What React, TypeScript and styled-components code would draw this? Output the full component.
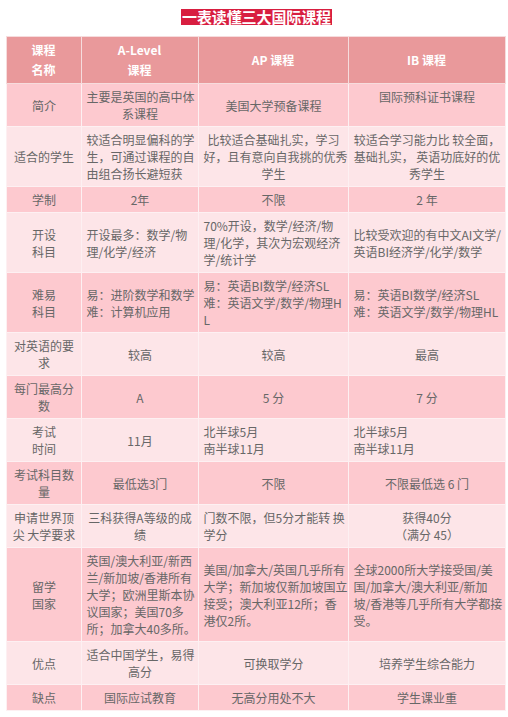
import React from "react";
import styled, { createGlobalStyle } from "styled-components";

const GlobalStyle = createGlobalStyle`
  html, body { margin: 0; padding: 0; background: #ffffff; }
  body { font-family: "Noto Sans CJK SC", "Noto Sans", sans-serif; }
`;

const Page = styled.div`
  width: 508px;
  box-sizing: border-box;
  padding: 9px 3px 6px 6px;
  display: flex;
  flex-direction: column;
  align-items: center;
`;

const Title = styled.h1`
  margin: 0 0 11px 2px;
  background: #d81e40;
  color: #ffffff;
  font-size: 15px;
  line-height: 16px;
  font-weight: 700;
  padding: 0 1px;
  letter-spacing: -0.1px;
  font-family: "Noto Sans CJK SC", sans-serif;
`;

const Table = styled.table`
  width: 499px;
  table-layout: fixed;
  border-collapse: collapse;
  font-size: 12px;
  color: #676767;
`;

const HeadCell = styled.th`
  background: #e9999b;
  color: #ffffff;
  font-weight: 700;
  font-size: 12px;
  line-height: 20px;
  padding: 3px 4px;
  text-align: center;
  vertical-align: middle;
  border: 1px solid #f6dcdd;
  white-space: nowrap;
`;

const Cell = styled.td<{ $tone: "dark" | "light"; $align: "left" | "center" }>`
  background: ${(p) => (p.$tone === "dark" ? "#fdc9cf" : "#fde5e8")};
  line-height: 17px;
  padding: 4px 4px 4px 5px;
  text-align: ${(p) => p.$align};
  vertical-align: middle;
  border: 1px solid #fdf0f2;
  white-space: nowrap;
  overflow: visible;
`;

type CellData = { lines: string[]; align?: "left" | "center" };
type RowData = { label: string[]; cells: CellData[] };

const c = (lines: string[], align: "left" | "center" = "center"): CellData => ({ lines, align });

const rows: RowData[] = [
  {
    label: ["简介"],
    cells: [c(["主要是英国的高中体", "系课程"]), c(["美国大学预备课程"]), c(["国际预科证书课程", "\u00a0"])],
  },
  {
    label: ["适合的学生"],
    cells: [
      c(["较适合明显偏科的学", "生，可通过课程的自", "由组合扬长避短获"], "left"),
      c(["比较适合基础扎实，学习", "好，且有意向自我挑的优秀", "学生"]),
      c(["较适合学习能力比 较全面，", "基础扎实， 英语功底好的优", "秀学生"]),
    ],
  },
  { label: ["学制"], cells: [c(["2年"]), c(["不限"]), c(["2 年"])] },
  {
    label: ["开设", "科目"],
    cells: [
      c(["开设最多：数学/物", "理/化学/经济"], "left"),
      c(["70%开设，数学/经济/物", "理/化学，其次为宏观经济", "学/统计学"], "left"),
      c(["比较受欢迎的有中文AI文学/", "英语BI经济学/化学/数学"], "left"),
    ],
  },
  {
    label: ["难易", "科目"],
    cells: [
      c(["易：进阶数学和数学", "难：计算机应用"], "left"),
      c(["易：英语BI数学/经济SL", "难：英语文学/数学/物理H", "L"], "left"),
      c(["易：英语BI数学/经济SL", "难：英语文学/数学/物理HL"], "left"),
    ],
  },
  { label: ["对英语的要", "求"], cells: [c(["较高"]), c(["较高"]), c(["最高"])] },
  { label: ["每门最高分", "数"], cells: [c(["A"]), c(["5 分"]), c(["7 分"])] },
  {
    label: ["考试", "时间"],
    cells: [c(["11月"]), c(["北半球5月", "南半球11月"], "left"), c(["北半球5月", "南半球11月"], "left")],
  },
  { label: ["考试科目数", "量"], cells: [c(["最低选3门"]), c(["不限"]), c(["不限最低选 6 门"])] },
  {
    label: ["申请世界顶", "尖 大学要求"],
    cells: [
      c(["三科获得A等级的成", "绩"]),
      c(["门数不限，但5分才能转 换", "学分"], "left"),
      c(["获得40分", "（满分 45）"]),
    ],
  },
  {
    label: ["留学", "国家"],
    cells: [
      c(["英国/澳大利亚/新西", "兰/新加坡/香港所有", "大学；欧洲里斯本协", "议国家；美国70多", "所；加拿大40多所。"], "left"),
      c(["美国/加拿大/英国几乎所有", "大学；新加坡仅新加坡国立", "接受；澳大利亚12所；香", "港仅2所。"], "left"),
      c(["全球2000所大学接受国/美", "国/加拿大/澳大利亚/新加", "坡/香港等几乎所有大学都接", "受。"], "left"),
    ],
  },
  {
    label: ["优点"],
    cells: [c(["适合中国学生，易得", "高分"]), c(["可换取学分"]), c(["培养学生综合能力"])],
  },
  { label: ["缺点"], cells: [c(["国际应试教育"]), c(["无高分用处不大"]), c(["学生课业重"])] },
];

const Lines: React.FC<{ lines: string[] }> = ({ lines }) => (
  <>
    {lines.map((l, i) => (
      <React.Fragment key={i}>
        {i > 0 && <br />}
        {l}
      </React.Fragment>
    ))}
  </>
);

export default function App() {
  return (
    <>
      <GlobalStyle />
      <Page>
        <Title>一表读懂三大国际课程</Title>
        <Table>
          <colgroup>
            <col style={{ width: 75 }} />
            <col style={{ width: 117 }} />
            <col style={{ width: 150 }} />
            <col style={{ width: 157 }} />
          </colgroup>
          <thead>
            <tr>
              <HeadCell>
                <Lines lines={["课程", "名称"]} />
              </HeadCell>
              <HeadCell>
                <Lines lines={["A-Level", "课程"]} />
              </HeadCell>
              <HeadCell>AP 课程</HeadCell>
              <HeadCell>IB 课程</HeadCell>
            </tr>
          </thead>
          <tbody>
            {rows.map((row, ri) => {
              const tone = ri % 2 === 0 ? "dark" : "light";
              return (
                <tr key={ri}>
                  <Cell $tone={tone} $align="center">
                    <Lines lines={row.label} />
                  </Cell>
                  {row.cells.map((cell, ci) => (
                    <Cell key={ci} $tone={tone} $align={cell.align ?? "center"}>
                      <Lines lines={cell.lines} />
                    </Cell>
                  ))}
                </tr>
              );
            })}
          </tbody>
        </Table>
      </Page>
    </>
  );
}
